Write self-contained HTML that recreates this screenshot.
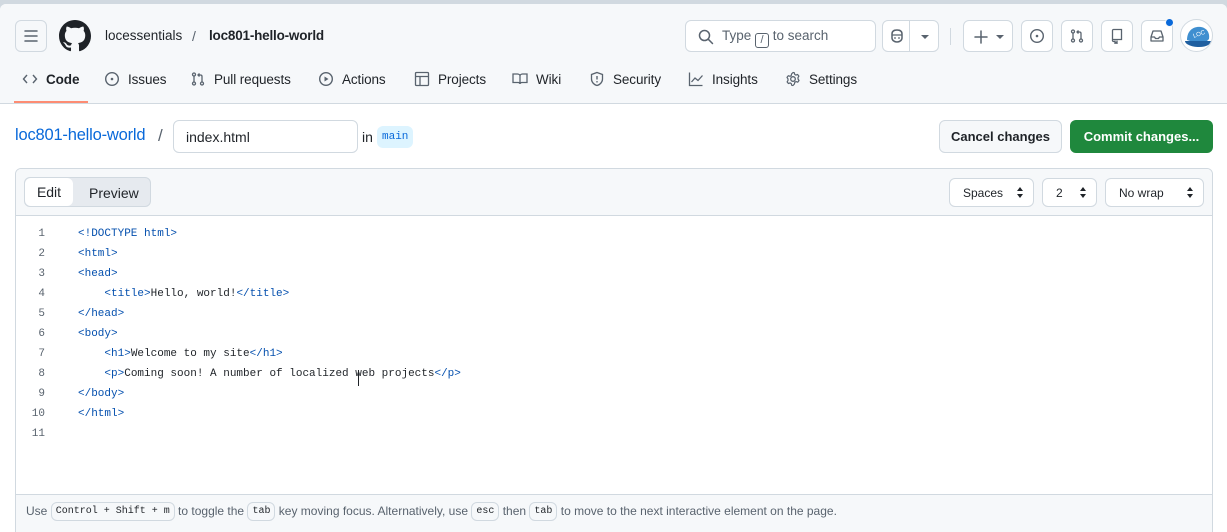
<!DOCTYPE html>
<html><head><style>
*{box-sizing:border-box;margin:0;padding:0}
body{width:1227px;height:532px;overflow:hidden;background:#d1d9e0;font-family:"Liberation Sans",sans-serif;color:#1f2328;font-size:14px;position:relative}
.page{position:absolute;left:0;top:4px;width:1227px;height:528px;background:#fff;border-radius:6px 6px 0 0;overflow:hidden}
.hdr{position:absolute;left:0;top:0;width:1227px;height:100px;background:#f6f8fa;border-bottom:1px solid #d1d9e0}
.btn{position:absolute;border:1px solid #d1d9e0;border-radius:6px;background:#f6f8fa}
.abs{position:absolute}
svg{display:block}
.tab{position:absolute;top:67px;font-size:13.5px;color:#1f2328;display:flex;align-items:center;gap:8px;letter-spacing:-0.1px}
.mono{font-family:"Liberation Mono",monospace}
.code{position:absolute;left:78px;font-family:"Liberation Mono",monospace;font-size:11px;color:#1f2328;white-space:pre}
.ln{position:absolute;left:20px;width:25px;text-align:right;font-family:"Liberation Mono",monospace;font-size:11px;color:#59636e}
.t{color:#0550ae}
.kbd{display:inline-block;border:1px solid #d1d9e0;border-radius:6px;background:#f6f8fa;font-family:"Liberation Mono",monospace;font-size:10px;padding:0 4px;line-height:17px;vertical-align:middle;color:#1f2328}
.sel{position:absolute;top:174px;height:29px;border:1px solid #d1d9e0;border-radius:6px;background:#fff;font-size:12px;display:flex;align-items:center;padding-left:13px}
.sel::after{content:"";position:absolute;right:10px;top:8px;width:0;height:0;border:3.5px solid transparent;border-bottom:4px solid #1f2328;border-top:none}
.sel::before{content:"";position:absolute;right:10px;top:15px;width:0;height:0;border:3.5px solid transparent;border-top:4px solid #1f2328;border-bottom:none}
</style></head><body>
<div class="page">
<div class="hdr">
  <div class="btn" style="left:15px;top:16px;width:32px;height:32px"><svg width="30" height="30" viewBox="0 0 30 30"><path d="M9 10h12M9 15h12M9 20h12" stroke="#59636e" stroke-width="1.5" stroke-linecap="round"/></svg></div>
  <svg class="abs" style="left:59px;top:16px" width="32" height="32" viewBox="0 0 16 16"><path fill="#1f2328" d="M8 0c4.42 0 8 3.58 8 8a8.013 8.013 0 0 1-5.45 7.590c-.4.08-.55-.17-.55-.38 0-.27.01-1.130.01-2.2 0-.75-.25-1.23-.54-1.48 1.78-.2 3.65-.88 3.65-3.95 0-.88-.31-1.59-.82-2.15.08-.2.36-1.02-.08-2.12 0 0-.67-.22-2.2.82-.64-.18-1.32-.27-2-.27-.68 0-1.36.09-2 .27-1.53-1.03-2.2-.82-2.2-.82-.44 1.1-.16 1.92-.08 2.12-.51.56-.82 1.28-.82 2.15 0 3.06 1.86 3.75 3.64 3.95-.23.2-.44.55-.51 1.07-.46.21-1.61.55-2.33-.66-.15-.24-.6-.83-1.23-.82-.67.01-.27.38.01.53.34.19.73.9.82 1.13.16.45.68 1.31 2.69.94 0 .67.01 1.3.01 1.49 0 .21-.15.45-.55.38A7.995 7.995 0 0 1 0 8c0-4.42 3.58-8 8-8Z"/></svg>
  <div class="abs" style="left:105px;top:24px;font-size:13.5px">locessentials</div>
  <div class="abs" style="left:192px;top:24px;font-size:14px;color:#59636e">/</div>
  <div class="abs" style="left:209px;top:24px;font-size:13.5px;font-weight:bold;letter-spacing:-0.2px">loc801-hello-world</div>

  <div class="btn" style="left:685px;top:16px;width:191px;height:32px;background:#fff">
    <svg class="abs" style="left:12px;top:8px" width="16" height="16" viewBox="0 0 16 16"><circle cx="6.5" cy="6.5" r="5" fill="none" stroke="#59636e" stroke-width="1.5"/><path d="M10.2 10.2l4.3 4.3" stroke="#59636e" stroke-width="1.5" stroke-linecap="round"/></svg>
    <div class="abs" style="left:36px;top:7px;color:#59636e;font-size:13.5px;white-space:nowrap">Type <span style="display:inline-block;border:1px solid #59636e;border-radius:3px;width:14px;height:15px;font-size:11px;text-align:center;line-height:13px;vertical-align:-3px">/</span> to search</div>
  </div>
  <div class="btn" style="left:882px;top:16px;width:57px;height:32px;background:#fff">
    <div class="abs" style="left:26px;top:0;width:1px;height:30px;background:#d1d9e0"></div>
    <svg class="abs" style="left:6px;top:7px" width="16" height="16" viewBox="0 0 16 16"><path d="M3 6c0-3 2-4 5-4s5 1 5 4v4c0 2-2 4-5 4s-5-2-5-4z" fill="none" stroke="#59636e" stroke-width="1.5"/><path d="M3 7h10" stroke="#59636e" stroke-width="1.3"/><circle cx="6" cy="10" r=".9" fill="#59636e"/><circle cx="10" cy="10" r=".9" fill="#59636e"/></svg>
    <div class="abs" style="left:38px;top:14px;border:4px solid transparent;border-top:4px solid #59636e"></div>
  </div>
  <div class="abs" style="left:950px;top:24px;width:1px;height:17px;background:#d1d9e0"></div>
  <div class="btn" style="left:963px;top:16px;width:50px;height:32px;background:#fff">
    <svg class="abs" style="left:9px;top:8px" width="16" height="16" viewBox="0 0 16 16"><path d="M8 2v12M2 8h12" stroke="#59636e" stroke-width="1.5" stroke-linecap="round"/></svg>
    <div class="abs" style="left:32px;top:14px;border:4px solid transparent;border-top:4px solid #59636e"></div>
  </div>
  <div class="btn" style="left:1021px;top:16px;width:32px;height:32px;background:#fff"><svg class="abs" style="left:7px;top:7px" width="16" height="16" viewBox="0 0 16 16"><circle cx="8" cy="8" r="6.3" fill="none" stroke="#59636e" stroke-width="1.4"/><circle cx="8" cy="8" r="1.3" fill="#59636e"/></svg></div>
  <div class="btn" style="left:1061px;top:16px;width:32px;height:32px;background:#fff"><svg class="abs" style="left:7px;top:7px" width="16" height="16" viewBox="0 0 16 16"><circle cx="4" cy="3.5" r="1.5" fill="none" stroke="#59636e" stroke-width="1.3"/><circle cx="4" cy="12.5" r="1.5" fill="none" stroke="#59636e" stroke-width="1.3"/><circle cx="12" cy="12.5" r="1.5" fill="none" stroke="#59636e" stroke-width="1.3"/><path d="M4 5v6M12 11V5.5c0-1-.5-1.5-1.5-1.5H8M9.5 2.5L8 4l1.5 1.5" fill="none" stroke="#59636e" stroke-width="1.3"/></svg></div>
  <div class="btn" style="left:1101px;top:16px;width:32px;height:32px;background:#fff"><svg class="abs" style="left:7px;top:7px" width="16" height="16" viewBox="0 0 16 16"><path d="M3.5 13V2.5c0-.5.5-1 1-1h8v10h-8c-.5 0-1 .5-1 1s.5 1 1 1h1M6 12.5v3l1-1 1 1v-3" fill="none" stroke="#59636e" stroke-width="1.3"/></svg></div>
  <div class="btn" style="left:1141px;top:16px;width:32px;height:32px;background:#fff"><svg class="abs" style="left:7px;top:7px" width="16" height="16" viewBox="0 0 16 16"><path d="M2 9l2-6h8l2 6v4H2zM2 9h3.5l1 1.5h3l1-1.5H14" fill="none" stroke="#59636e" stroke-width="1.3" stroke-linejoin="round"/></svg></div>
  <div class="abs" style="left:1165px;top:14px;width:9px;height:9px;border-radius:50%;background:#0969da;border:1px solid #f6f8fa"></div>
  <div class="abs" style="left:1180px;top:15px;width:33px;height:33px;border-radius:50%;background:#fff;border:1px solid #d1d9e0;overflow:hidden">
    <svg width="33" height="33" viewBox="0 0 33 33"><path d="M6 20c0-9 6-14 14-13 6 1 9 6 8 12l-2 2H9z" fill="#3f8fd0"/><path d="M4 21h26c0 3-4 6-12 6S4 24 4 21z" fill="#1f5fa0"/><text x="12" y="17" font-size="6" fill="#fff" font-family="Liberation Sans" transform="rotate(-20 15 15)">LOC</text></svg>
  </div>

  <div class="tab" style="left:22px"><svg width="16" height="16" viewBox="0 0 16 16"><path d="M5 4L1.5 8 5 12M11 4l3.5 4L11 12" fill="none" stroke="#59636e" stroke-width="1.4"/></svg><b>Code</b></div>
  <div class="abs" style="left:14px;top:97px;width:74px;height:2px;background:#fd8c73"></div>
  <div class="tab" style="left:104px"><svg width="16" height="16" viewBox="0 0 16 16"><circle cx="8" cy="8" r="6.3" fill="none" stroke="#59636e" stroke-width="1.4"/><circle cx="8" cy="8" r="1.3" fill="#59636e"/></svg>Issues</div>
  <div class="tab" style="left:190px"><svg width="16" height="16" viewBox="0 0 16 16"><circle cx="4" cy="3.5" r="1.5" fill="none" stroke="#59636e" stroke-width="1.3"/><circle cx="4" cy="12.5" r="1.5" fill="none" stroke="#59636e" stroke-width="1.3"/><circle cx="12" cy="12.5" r="1.5" fill="none" stroke="#59636e" stroke-width="1.3"/><path d="M4 5v6M12 11V5.5c0-1-.5-1.5-1.5-1.5H8M9.5 2.5L8 4l1.5 1.5" fill="none" stroke="#59636e" stroke-width="1.3"/></svg>Pull requests</div>
  <div class="tab" style="left:318px"><svg width="16" height="16" viewBox="0 0 16 16"><circle cx="8" cy="8" r="6.3" fill="none" stroke="#59636e" stroke-width="1.4"/><path d="M6.5 5.5v5l4-2.5z" fill="#59636e"/></svg>Actions</div>
  <div class="tab" style="left:414px"><svg width="16" height="16" viewBox="0 0 16 16"><rect x="1.5" y="1.5" width="13" height="13" rx="1" fill="none" stroke="#59636e" stroke-width="1.3"/><path d="M1.5 5.5h13M6 5.5v9" stroke="#59636e" stroke-width="1.3"/></svg>Projects</div>
  <div class="tab" style="left:512px"><svg width="16" height="16" viewBox="0 0 16 16"><path d="M1 3h4.5c1.5 0 2.5 1 2.5 2v8c0-1-1-1.5-2-1.5H1zM15 3h-4.5C9 3 8 4 8 5v8c0-1 1-1.5 2-1.5h5z" fill="none" stroke="#59636e" stroke-width="1.3"/></svg>Wiki</div>
  <div class="tab" style="left:589px"><svg width="16" height="16" viewBox="0 0 16 16"><path d="M8 1.5l5.5 2v4.5c0 3.5-3 6-5.5 6.5C5.5 14 2.5 11.5 2.5 8V3.5z" fill="none" stroke="#59636e" stroke-width="1.3"/><path d="M8 5v3.5" stroke="#59636e" stroke-width="1.4"/><circle cx="8" cy="10.8" r=".8" fill="#59636e"/></svg>Security</div>
  <div class="tab" style="left:688px"><svg width="16" height="16" viewBox="0 0 16 16"><path d="M1.5 1.5v13h13M3.5 11l3.5-4 3 2.5 4.5-5" fill="none" stroke="#59636e" stroke-width="1.3"/></svg>Insights</div>
  <div class="tab" style="left:785px"><svg width="16" height="16" viewBox="0 0 16 16"><circle cx="8" cy="8" r="2.3" fill="none" stroke="#59636e" stroke-width="1.3"/><path d="M8 1.5l1.3.2.4 1.7 1.2.7 1.7-.6 1.3 1.6-.9 1.5v1.4l1 1.5-1.3 1.7-1.7-.6-1.2.7-.4 1.7L8 14.5l-1.3-.2-.4-1.700-1.2-.7-1.7.6-1.3-1.6.9-1.5V7.9l-1-1.5 1.3-1.7 1.7.6 1.2-.7.4-1.7z" fill="none" stroke="#59636e" stroke-width="1.2" stroke-linejoin="round"/></svg>Settings</div>
</div>

<div class="abs" style="left:15px;top:122px;font-size:16.5px;color:#0969da;letter-spacing:-0.2px">loc801-hello-world</div>
<div class="abs" style="left:158px;top:122px;font-size:17px;color:#59636e">/</div>
<div class="abs" style="left:173px;top:116px;width:185px;height:33px;border:1px solid #d1d9e0;border-radius:6px;padding:8px 12px;font-size:14px">index.html</div>
<div class="abs" style="left:362px;top:125px;font-size:14px">in</div>
<div class="abs mono" style="left:377px;top:122px;height:22px;background:#ddf4ff;color:#0969da;border-radius:6px;padding:5px 5px;font-size:11px;line-height:12px">main</div>

<div class="btn" style="left:939px;top:116px;width:123px;height:33px;font-weight:bold;font-size:13px;text-align:center;line-height:31px">Cancel changes</div>
<div class="abs" style="left:1070px;top:116px;width:143px;height:33px;background:#1f883d;border-radius:6px;color:#fff;font-weight:bold;font-size:13px;text-align:center;line-height:33px">Commit changes...</div>

<div class="abs" style="left:15px;top:164px;width:1198px;height:380px;border:1px solid #d1d9e0;border-radius:6px;overflow:hidden">
  <div class="abs" style="left:0;top:0;width:1198px;height:47px;background:#f6f8fa;border-bottom:1px solid #d1d9e0"></div>
</div>
<div class="abs" style="left:24px;top:173px;width:127px;height:30px;background:#e6eaef;border:1px solid #d1d9e0;border-radius:6px"></div>
<div class="abs" style="left:25px;top:174px;width:48px;height:28px;background:#fff;border-radius:6px;font-size:14px;text-align:center;line-height:28px">Edit</div>
<div class="abs" style="left:89px;top:181px;font-size:14px">Preview</div>
<div class="sel" style="left:949px;width:85px">Spaces</div>
<div class="sel" style="left:1042px;width:55px">2</div>
<div class="sel" style="left:1105px;width:99px">No wrap</div>

<div class="ln" style="top:224px">1</div><div class="code" style="top:224px"><span class="t">&lt;!DOCTYPE html&gt;</span></div>
<div class="ln" style="top:244px">2</div><div class="code" style="top:244px"><span class="t">&lt;html&gt;</span></div>
<div class="ln" style="top:264px">3</div><div class="code" style="top:264px"><span class="t">&lt;head&gt;</span></div>
<div class="ln" style="top:284px">4</div><div class="code" style="top:284px">    <span class="t">&lt;title&gt;</span>Hello, world!<span class="t">&lt;/title&gt;</span></div>
<div class="ln" style="top:304px">5</div><div class="code" style="top:304px"><span class="t">&lt;/head&gt;</span></div>
<div class="ln" style="top:324px">6</div><div class="code" style="top:324px"><span class="t">&lt;body&gt;</span></div>
<div class="ln" style="top:344px">7</div><div class="code" style="top:344px">    <span class="t">&lt;h1&gt;</span>Welcome to my site<span class="t">&lt;/h1&gt;</span></div>
<div class="ln" style="top:364px">8</div><div class="code" style="top:364px">    <span class="t">&lt;p&gt;</span>Coming soon! A number of localized web projects<span class="t">&lt;/p&gt;</span></div>
<div class="abs" style="left:358px;top:366px;width:1px;height:16px;background:#1f2328"></div>
<div class="ln" style="top:384px">9</div><div class="code" style="top:384px"><span class="t">&lt;/body&gt;</span></div>
<div class="ln" style="top:404px">10</div><div class="code" style="top:404px"><span class="t">&lt;/html&gt;</span></div>
<div class="ln" style="top:424px">11</div>

<div class="abs" style="left:16px;top:490px;width:1196px;height:40px;background:#f6f8fa;border-top:1px solid #d1d9e0"></div>
<div class="abs" style="left:26px;top:498px;font-size:12px;line-height:19px;color:#59636e;white-space:nowrap">Use <span class="kbd">Control + Shift + m</span> to toggle the <span class="kbd">tab</span> key moving focus. Alternatively, use <span class="kbd">esc</span> then <span class="kbd">tab</span> to move to the next interactive element on the page.</div>
</div>
</body></html>
